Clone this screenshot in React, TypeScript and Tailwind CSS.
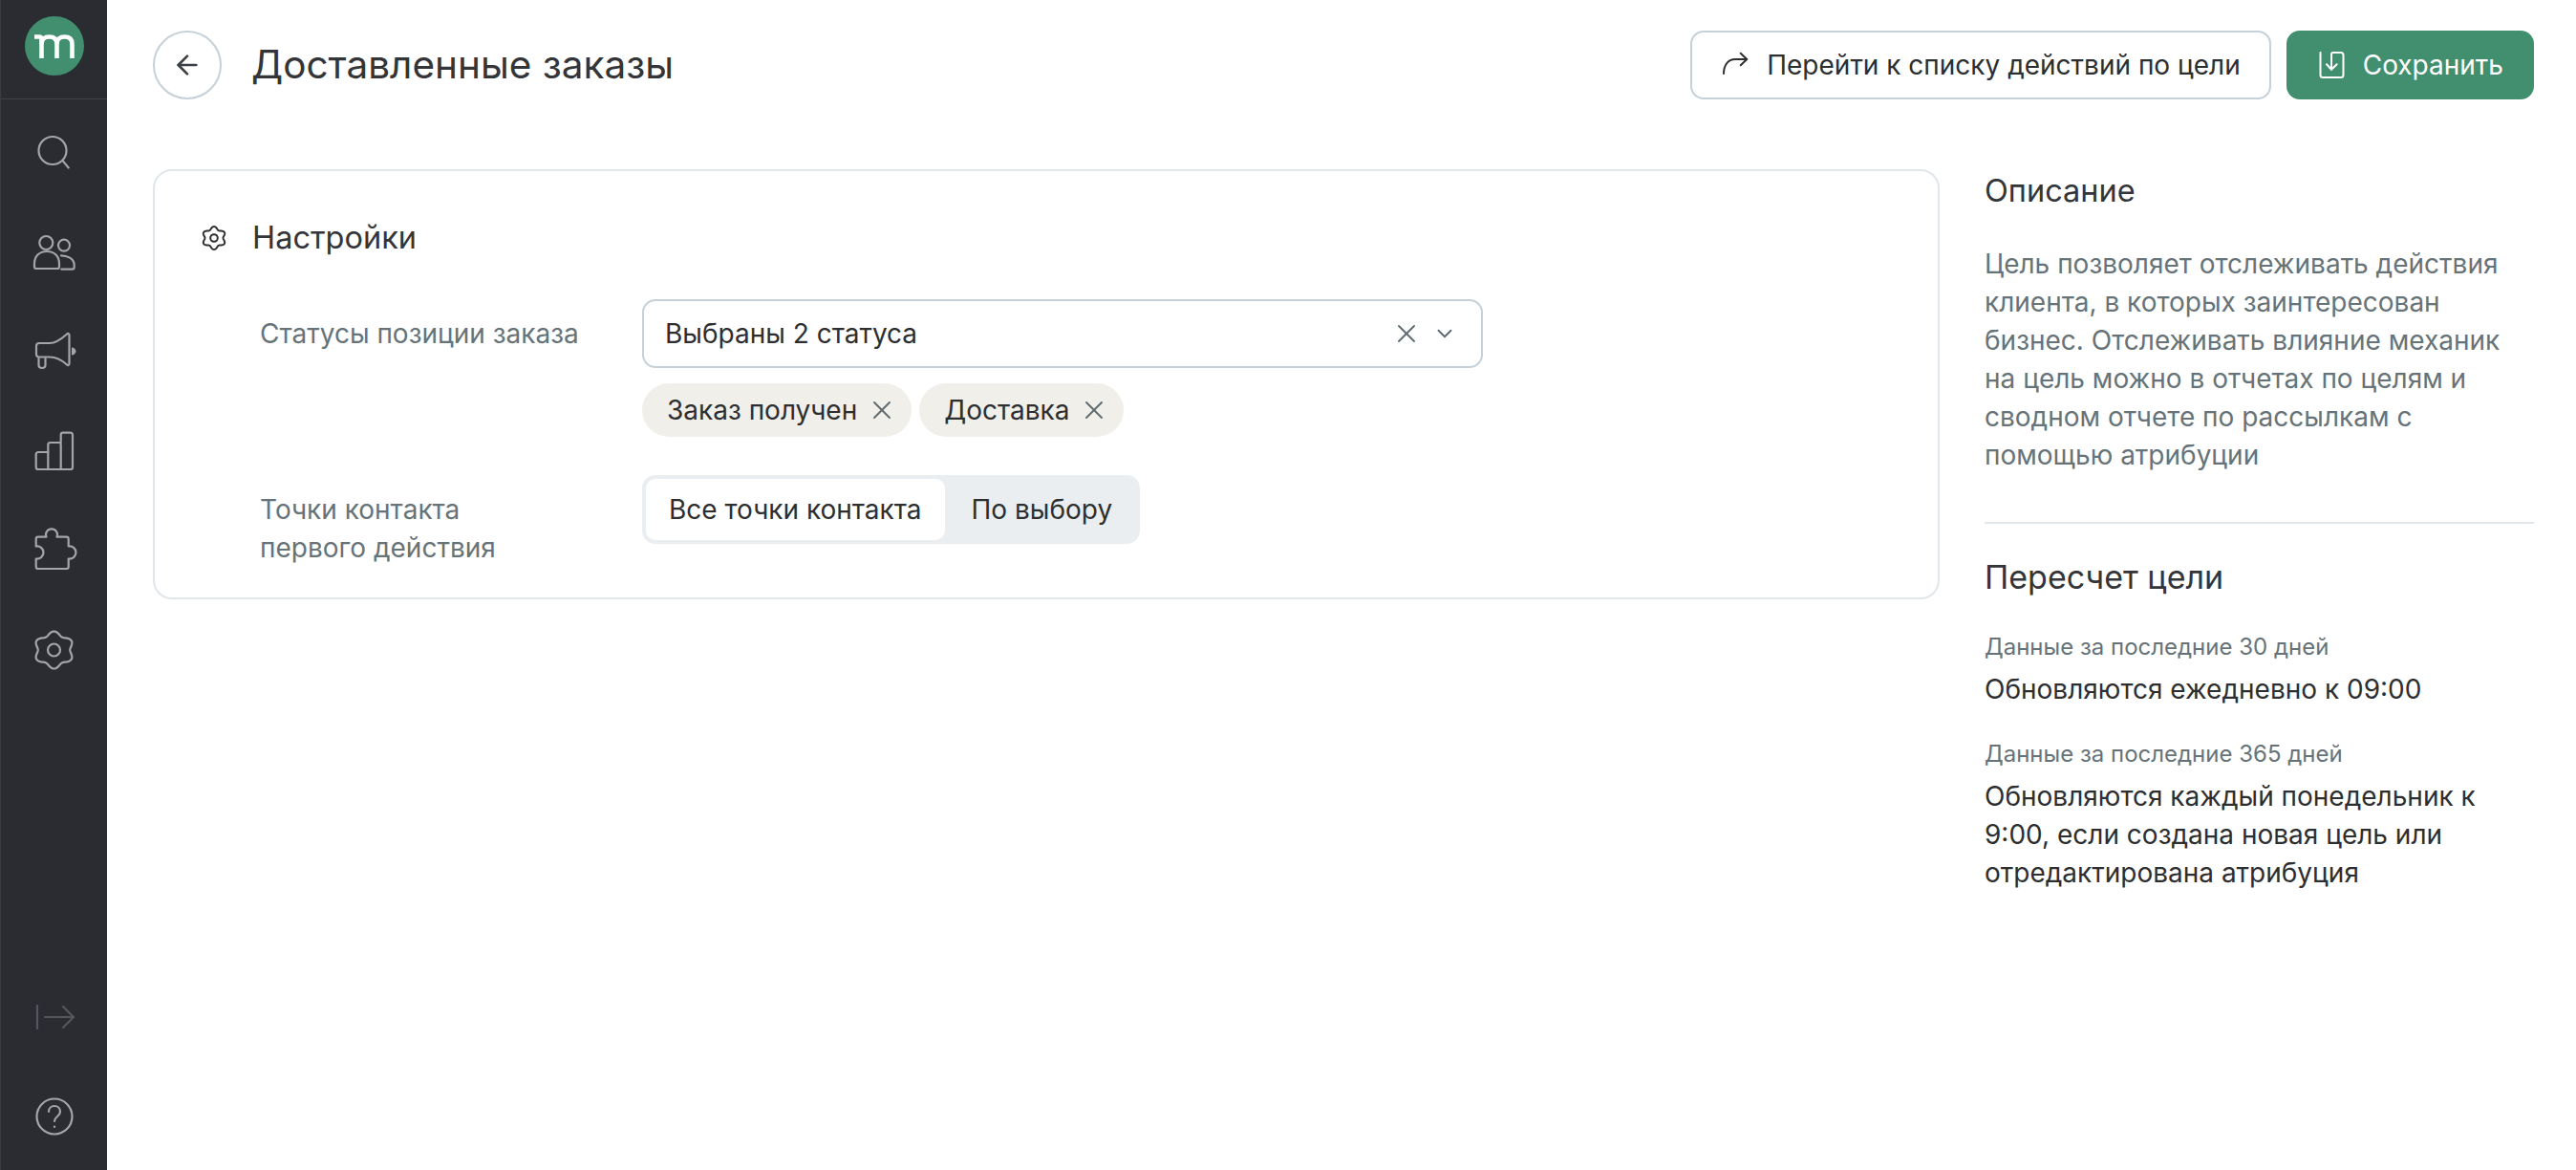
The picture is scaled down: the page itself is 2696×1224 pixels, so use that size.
import { ArrowLeft, X, ChevronDown } from 'lucide-react';

const font = { fontFamily: 'Inter, "Noto Sans", sans-serif' };

// шестерёнка с шестью лепестками
function gearPath(cx: number, cy: number, r: number, amp: number, sx: number) {
  const pts: string[] = [];
  for (let i = 0; i < 120; i++) {
    const t = (i / 120) * Math.PI * 2;
    const rad = r + amp * Math.cos(6 * t);
    pts.push(`${(cx + rad * Math.sin(t) * sx).toFixed(2)} ${(cy - rad * Math.cos(t)).toFixed(2)}`);
  }
  return `M${pts.join('L')}Z`;
}

function SideIcon({ children }: { children: React.ReactNode }) {
  return (
    <div className="flex h-[104px] w-full items-center justify-center">
      <svg width="48" height="48" viewBox="0 0 48 48" fill="none" stroke="#a3a5a8" strokeWidth="2.2" strokeLinecap="round" strokeLinejoin="round">
        {children}
      </svg>
    </div>
  );
}

function Sidebar() {
  return (
    <aside className="flex h-[1224px] w-[112px] shrink-0 flex-col border-l border-[#3a3c42] bg-[#2a2c32]">
      <div className="flex h-[104px] shrink-0 items-center justify-center border-b border-[#3f4147] pb-[7px]">
        <div className="flex h-[62px] w-[62px] items-center justify-center rounded-full bg-[#418f6f]">
          <svg width="42" height="25" viewBox="0 0 42 25" fill="none" stroke="#fff" strokeWidth="4.6">
            <path d="M0 2.500h5c2 0 2.500 1 2.500 3V25" />
            <path d="M7.500 10c0-5 3-7.500 8-7.500s8 2.500 8 7.500v15" />
            <path d="M23.500 10c0-5 3-7.500 8-7.500s8 2.500 8 7.500v15" />
          </svg>
        </div>
      </div>
      <div className="flex flex-col pt-[4px]">
        <SideIcon>
          <circle cx="22" cy="21.500" r="14.500" />
          <path d="M33 32.600l5.700 6.900" />
        </SideIcon>
        <SideIcon>
          <circle cx="15.300" cy="14" r="7" />
          <path d="M3 39v-3c0-8 5-13 13-13s13 5 13 13v3c0 1-1 2-2 2H5c-1 0-2-1-2-2z" />
          <circle cx="34" cy="16.700" r="6" />
          <path d="M31 27.300c6 0 13.700 3 13.700 10v2c0 1.500-1 2.400-2 2.400H31.300" />
        </SideIcon>
        <SideIcon>
          <path d="M5 18c0-2 1-3 3-3h11c7 0 13-5 18-9.500 1-1 2.500-.5 2.500 1v30c0 1.500-1.500 2-2.500 1-5-4.500-11-8-18-8H8c-2 0-3-1-3-3z" />
          <path d="M7.500 31v7c0 2 1.500 3 3.500 3s3.500-1 3.500-3v-7" />
          <path d="M42 19.500c2.500 0 4.500 2 4.500 4s-2 4-4.500 4z" fill="#a3a5a8" stroke="none" />
        </SideIcon>
        <SideIcon>
          <path d="M17.300 25H7c-1.300 0-2.300 1-2.300 2.300v13.400C4.700 42 5.700 43 7 43h33.700c1.300 0 2.300-1 2.300-2.300V7c0-1.300-1-2.300-2.300-2.300H33c-1.300 0-2.300 1-2.300 2.300v8" />
          <path d="M17.300 43V17.300c0-1.300 1-2.300 2.300-2.300h8.800c1.300 0 2.300 1 2.300 2.300V43" />
        </SideIcon>
        <SideIcon>
          <path d="M7 9.700H15.500A6 6 0 1 1 26.500 9.700H36.400A2.300 2.300 0 0 1 38.700 12V19.500A6.600 6.600 0 1 1 38.700 32.500V40.700A2.300 2.300 0 0 1 36.400 43H7A2.300 2.300 0 0 1 4.700 40.700V32.500A6.600 6.600 0 1 0 4.700 19.500V12A2.300 2.300 0 0 1 7 9.700Z" />
        </SideIcon>
        <SideIcon>
          <circle cx="23.500" cy="24" r="6.500" />
          <path d={gearPath(23.5, 24, 17.5, 2, 1.08)} />
        </SideIcon>
      </div>
      <div className="mt-auto flex flex-col pb-[4px]">
        <div className="flex h-[104px] w-full items-center justify-center">
          <svg width="48" height="48" viewBox="0 0 48 48" fill="none" stroke="#55575c" strokeWidth="2.2" strokeLinecap="round" strokeLinejoin="round">
            <path d="M6 12v24" />
            <path d="M14 24h30" />
            <path d="M33 13l11 11-11 11" />
          </svg>
        </div>
        <SideIcon>
          <circle cx="24" cy="24" r="18.500" />
          <path d="M18 19c0-4 3-6 6-6s6 2 6 6c0 5-6 5-6 10" />
          <path d="M24 34.500v.5" />
        </SideIcon>
      </div>
    </aside>
  );
}

function Tag({ label }: { label: string }) {
  return (
    <div className="flex h-[56px] items-center gap-[10px] rounded-full bg-[#f0efea] pl-[26px] pr-[15px] text-[#2d2e30]">
      <span>{label}</span>
      <X size={32} strokeWidth={1.4} className="text-[#5f6b70]" />
    </div>
  );
}

export default function App() {
  return (
    <div className="flex h-[1224px] w-[2696px] overflow-hidden bg-white text-[28px] leading-[40px] text-[#2d2e30]" style={font}>
      <Sidebar />
      <main className="min-w-0 flex-1 pl-[48px] pr-[44px] pt-[32px]">
        <header className="flex h-[72px] items-center">
          <button className="flex h-[72px] w-[72px] items-center justify-center rounded-full border-2 border-[#c5d0d8] text-[#3c4043]">
            <ArrowLeft size={32} strokeWidth={2} />
          </button>
          <h1 className="ml-[31px] text-[40.500px] font-normal leading-[48px] text-[#333538]">Доставленные заказы</h1>
          <div className="ml-auto flex gap-[16px]">
            <button className="flex h-[72px] items-center gap-[16px] rounded-[14px] border-2 border-[#c5d0d8] bg-white px-[30px]">
              <svg width="32" height="32" viewBox="0 0 32 32" fill="none" stroke="#2d2e30" strokeWidth="2" strokeLinecap="round" strokeLinejoin="round">
                <path d="M3 25c0-8 4-15 12-15h12" />
                <path d="M20.700 3.700l6.600 6.300-6.600 6.300" />
              </svg>
              Перейти к списку действий по цели
            </button>
            <button className="flex h-[72px] items-center gap-[16px] rounded-[14px] bg-[#418f6f] px-[32px] text-white">
              <svg width="32" height="32" viewBox="0 0 32 32" fill="none" stroke="#fff" strokeWidth="2" strokeLinecap="round" strokeLinejoin="round">
                <path d="M3.500 3v23.500c0 1.500 1 2.500 2.500 2.500h19c1.500 0 2.500-1 2.500-2.500V5.500c0-1.500-1-2.500-2.500-2.500h-8c-1.500 0-2 1-2 2v15.700" />
                <path d="M10 15.300l5 5.400 5.700-5.400" />
              </svg>
              Сохранить
            </button>
          </div>
        </header>
        <div className="mt-[73px] flex items-start gap-[47px]">
          <section className="h-[450px] w-[1870px] shrink-0 rounded-[20px] border-2 border-[#e1e6ea] pl-[48px] pt-[50px]">
            <div className="flex h-[40px] items-center gap-[26px]">
              <svg width="28" height="28" viewBox="0 0 48 48" fill="none" stroke="#2d2e30" strokeWidth="3.4" strokeLinecap="round" strokeLinejoin="round">
                <circle cx="24" cy="24" r="6.500" />
                <path d={gearPath(24, 24, 18, 2.5, 1.05)} />
              </svg>
              <h2 className="text-[32.500px] font-normal leading-[40px] text-[#333538]">Настройки</h2>
            </div>
            <div className="mt-[44px] flex pl-[62px]">
              <div className="w-[400px] shrink-0 pt-[16px] text-[#667379]">Статусы позиции заказа</div>
              <div className="w-[880px]">
                <div className="flex h-[72px] items-center rounded-[14px] border-2 border-[#c5d0d8] pl-[22px] pr-[25px]">
                  <span>Выбраны 2 статуса</span>
                  <X size={32} strokeWidth={1.4} className="ml-auto text-[#5f6b70]" />
                  <ChevronDown size={26} strokeWidth={1.8} className="ml-[11px] text-[#5f6b70]" />
                </div>
                <div className="mt-[16px] flex gap-[8px]">
                  <Tag label="Заказ получен" />
                  <Tag label="Доставка" />
                </div>
              </div>
            </div>
            <div className="mt-[40px] flex pl-[62px]">
              <div className="w-[400px] shrink-0 pt-[16px] text-[#667379]">
                Точки контакта
                <br />
                первого действия
              </div>
              <div className="flex h-[72px] rounded-[14px] bg-[#ebeef0] p-[4px]">
                <div className="flex items-center rounded-[10px] bg-white px-[24px]">Все точки контакта</div>
                <div className="flex items-center pl-[28px] pr-[25px]">По выбору</div>
              </div>
            </div>
          </section>
          <aside className="min-w-0 flex-1">
            <h3 className="mt-[3px] text-[32.500px] font-normal leading-[40px] text-[#333538]">Описание</h3>
            <p className="mt-[36px] text-[#667379]">
              Цель позволяет отслеживать действия клиента, в которых заинтересован бизнес. Отслеживать влияние механик на цель можно в отчетах по целям и сводном отчете по рассылкам с помощью атрибуции
            </p>
            <div className="mb-[36px] mt-[50px] h-[2px] bg-[#e1e6ea]" />
            <h3 className="text-[34px] font-normal leading-[40px] text-[#333538]">Пересчет цели</h3>
            <div className="mt-[37px] text-[24px] leading-[32px] text-[#667379]">Данные за последние 30 дней</div>
            <div className="mt-[8px]">Обновляются ежедневно к 09:00</div>
            <div className="mt-[32px] text-[24px] leading-[32px] text-[#667379]">Данные за последние 365 дней</div>
            <div className="mt-[8px]">Обновляются каждый понедельник к 9:00, если создана новая цель или отредактирована атрибуция</div>
          </aside>
        </div>
      </main>
    </div>
  );
}
